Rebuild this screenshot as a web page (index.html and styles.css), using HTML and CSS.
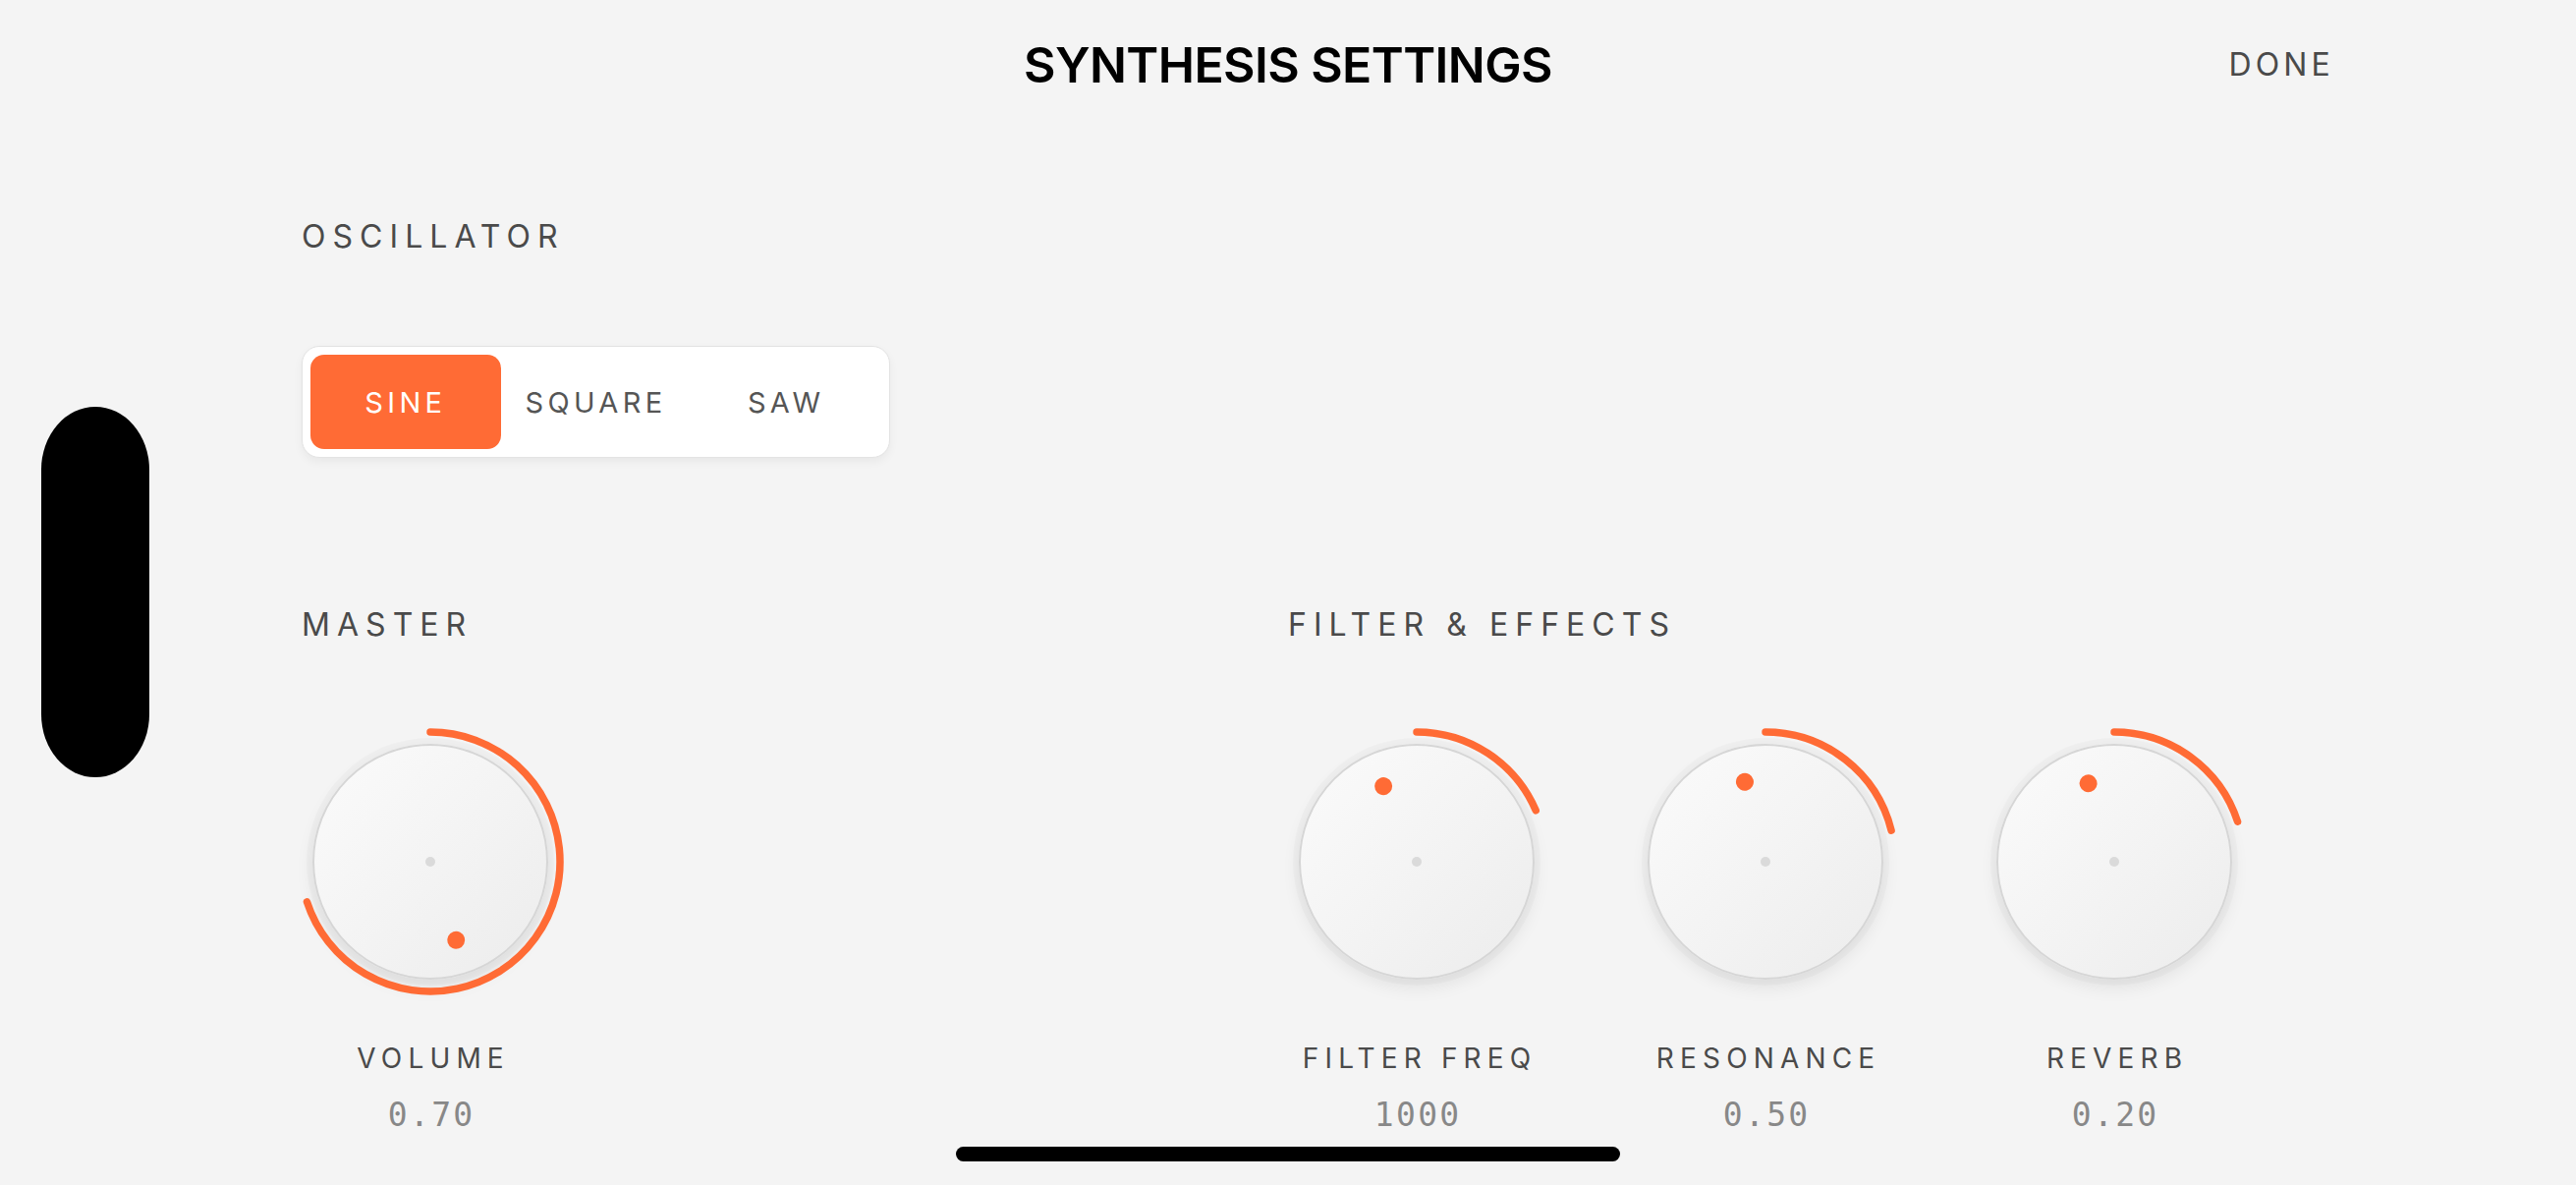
FILE: index.html
```html
<!DOCTYPE html>
<html lang="en">
<head>
<meta charset="utf-8">
<title>Synthesis Settings</title>
<link rel="stylesheet" href="styles.css">
</head>
<body>
<div class="notch"></div>

<header class="topbar">
  <h1 class="title">SYNTHESIS SETTINGS</h1>
  <button class="done">DONE</button>
</header>

<main class="content">
  <section class="osc">
    <h2 class="section-title">OSCILLATOR</h2>
    <div class="segmented">
      <button class="seg seg-active">SINE</button>
      <button class="seg">SQUARE</button>
      <button class="seg">SAW</button>
    </div>
  </section>

  <div class="groups">
    <section class="group">
      <h2 class="section-title">MASTER</h2>
      <div class="knobs">
        <div class="knob-col">
          <div class="knob">
            <svg class="arc" viewBox="0 0 262 262" width="262" height="262"><path d="M131 -1 A132 132 0 1 1 5.46 171.79"/></svg>
            <div class="face">
              <span class="center-dot"></span>
              <div class="indicator" style="transform: rotate(161.8deg)"><span class="dot"></span></div>
            </div>
          </div>
          <div class="knob-label">VOLUME</div>
          <div class="knob-value">0.70</div>
        </div>
      </div>
    </section>

    <section class="group">
      <h2 class="section-title">FILTER &amp; EFFECTS</h2>
      <div class="knobs">
        <div class="knob-col">
          <div class="knob">
            <svg class="arc" viewBox="0 0 262 262" width="262" height="262"><path d="M131 -1 A132 132 0 0 1 252.23 78.79"/></svg>
            <div class="face">
              <span class="center-dot"></span>
              <div class="indicator" style="transform: rotate(-23.8deg)"><span class="dot"></span></div>
            </div>
          </div>
          <div class="knob-label">FILTER FREQ</div>
          <div class="knob-value">1000</div>
        </div>
        <div class="knob-col">
          <div class="knob">
            <svg class="arc" viewBox="0 0 262 262" width="262" height="262"><path d="M131 -1 A132 132 0 0 1 259.08 99.07"/></svg>
            <div class="face">
              <span class="center-dot"></span>
              <div class="indicator" style="transform: rotate(-14.5deg)"><span class="dot"></span></div>
            </div>
          </div>
          <div class="knob-label">RESONANCE</div>
          <div class="knob-value">0.50</div>
        </div>
        <div class="knob-col">
          <div class="knob">
            <svg class="arc" viewBox="0 0 262 262" width="262" height="262"><path d="M131 -1 A132 132 0 0 1 256.55 90.21"/></svg>
            <div class="face">
              <span class="center-dot"></span>
              <div class="indicator" style="transform: rotate(-18.3deg)"><span class="dot"></span></div>
            </div>
          </div>
          <div class="knob-label">REVERB</div>
          <div class="knob-value">0.20</div>
        </div>
      </div>
    </section>
  </div>
</main>

<div class="home-indicator"></div>
</body>
</html>
```

FILE: styles.css
```css
* {
  box-sizing: border-box;
  margin: 0;
  padding: 0;
}

html, body {
  width: 2622px;
  height: 1206px;
}

body {
  position: relative;
  overflow: hidden;
  background: #f4f4f4;
  font-family: Inter, "Noto Sans", "Liberation Sans", sans-serif;
  color: #4a4a4a;
}

.notch {
  position: absolute;
  left: 42px;
  top: 414px;
  width: 110px;
  height: 377px;
  background: #000;
  border-radius: 55px / 64px;
}

.topbar {
  display: grid;
  grid-template-columns: 1fr auto 1fr;
  align-items: center;
  padding: 35px 246px 0 246px;
}

.title {
  grid-column: 2;
  font-size: 50px;
  font-weight: 600;
  line-height: 62px;
  letter-spacing: -0.012em;
  color: #000;
}

.done {
  grid-column: 3;
  justify-self: end;
  background: none;
  border: 0;
  font-family: inherit;
  font-size: 32px;
  letter-spacing: 0.13em;
  line-height: 40px;
  color: #4a4a4a;
}

.content {
  padding: 0 307px;
}

.osc {
  margin-top: 124px;
}

.section-title {
  font-size: 32px;
  font-weight: 400;
  line-height: 40px;
  letter-spacing: 0.22em;
  color: #4a4a4a;
  white-space: nowrap;
}

.segmented {
  margin-top: 91px;
  display: flex;
  width: 599px;
  height: 114px;
  padding: 8px;
  background: #fff;
  border: 1px solid #e3e3e3;
  border-radius: 18px;
  box-shadow: 0 4px 10px rgba(0, 0, 0, 0.05);
}

.seg {
  flex: 1;
  border: 0;
  background: none;
  border-radius: 14px;
  font-family: inherit;
  font-size: 29px;
  letter-spacing: 0.15em;
  color: #555;
}

.seg-active {
  background: #ff6b35;
  color: #fff;
}

.groups {
  display: grid;
  grid-template-columns: 1fr 1fr;
  margin-top: 150px;
}

.knobs {
  display: flex;
  gap: 93px;
  margin-top: 90px;
}

.knob-col {
  width: 262px;
  display: flex;
  flex-direction: column;
  align-items: center;
}

.knob {
  position: relative;
  width: 262px;
  height: 262px;
  display: flex;
  align-items: center;
  justify-content: center;
}

.arc {
  position: absolute;
  inset: 0;
  overflow: visible;
  z-index: 2;
}

.arc path {
  fill: none;
  stroke: #ff6b35;
  stroke-width: 7.5;
  stroke-linecap: round;
}

.face {
  position: relative;
  width: 240px;
  height: 240px;
  border-radius: 50%;
  border: 2px solid #d6d6d6;
  background: linear-gradient(135deg, #fbfbfb 0%, #f3f3f3 55%, #ececec 100%);
  box-shadow: 0 8px 18px rgba(0, 0, 0, 0.08), 0 0 0 6px rgba(0, 0, 0, 0.02);
}

.center-dot {
  position: absolute;
  left: 113px;
  top: 113px;
  width: 10px;
  height: 10px;
  border-radius: 50%;
  background: #dadada;
}

.indicator {
  position: absolute;
  inset: 0;
}

.dot {
  position: absolute;
  left: 109px;
  top: 25px;
  width: 18px;
  height: 18px;
  border-radius: 50%;
  background: #ff6b35;
}

.knob-label {
  margin-top: 52px;
  font-size: 28px;
  line-height: 34px;
  letter-spacing: 0.22em;
  margin-right: -0.22em;
  color: #4a4a4a;
  white-space: nowrap;
}

.knob-value {
  margin-top: 21px;
  font-family: "DejaVu Sans Mono", "Liberation Mono", monospace;
  font-size: 33px;
  line-height: 40px;
  letter-spacing: 0.07em;
  margin-right: -0.07em;
  color: #888;
}

.home-indicator {
  position: absolute;
  left: 50%;
  bottom: 24px;
  width: 676px;
  height: 15px;
  margin-left: -338px;
  border-radius: 8px;
  background: #000;
}
```
